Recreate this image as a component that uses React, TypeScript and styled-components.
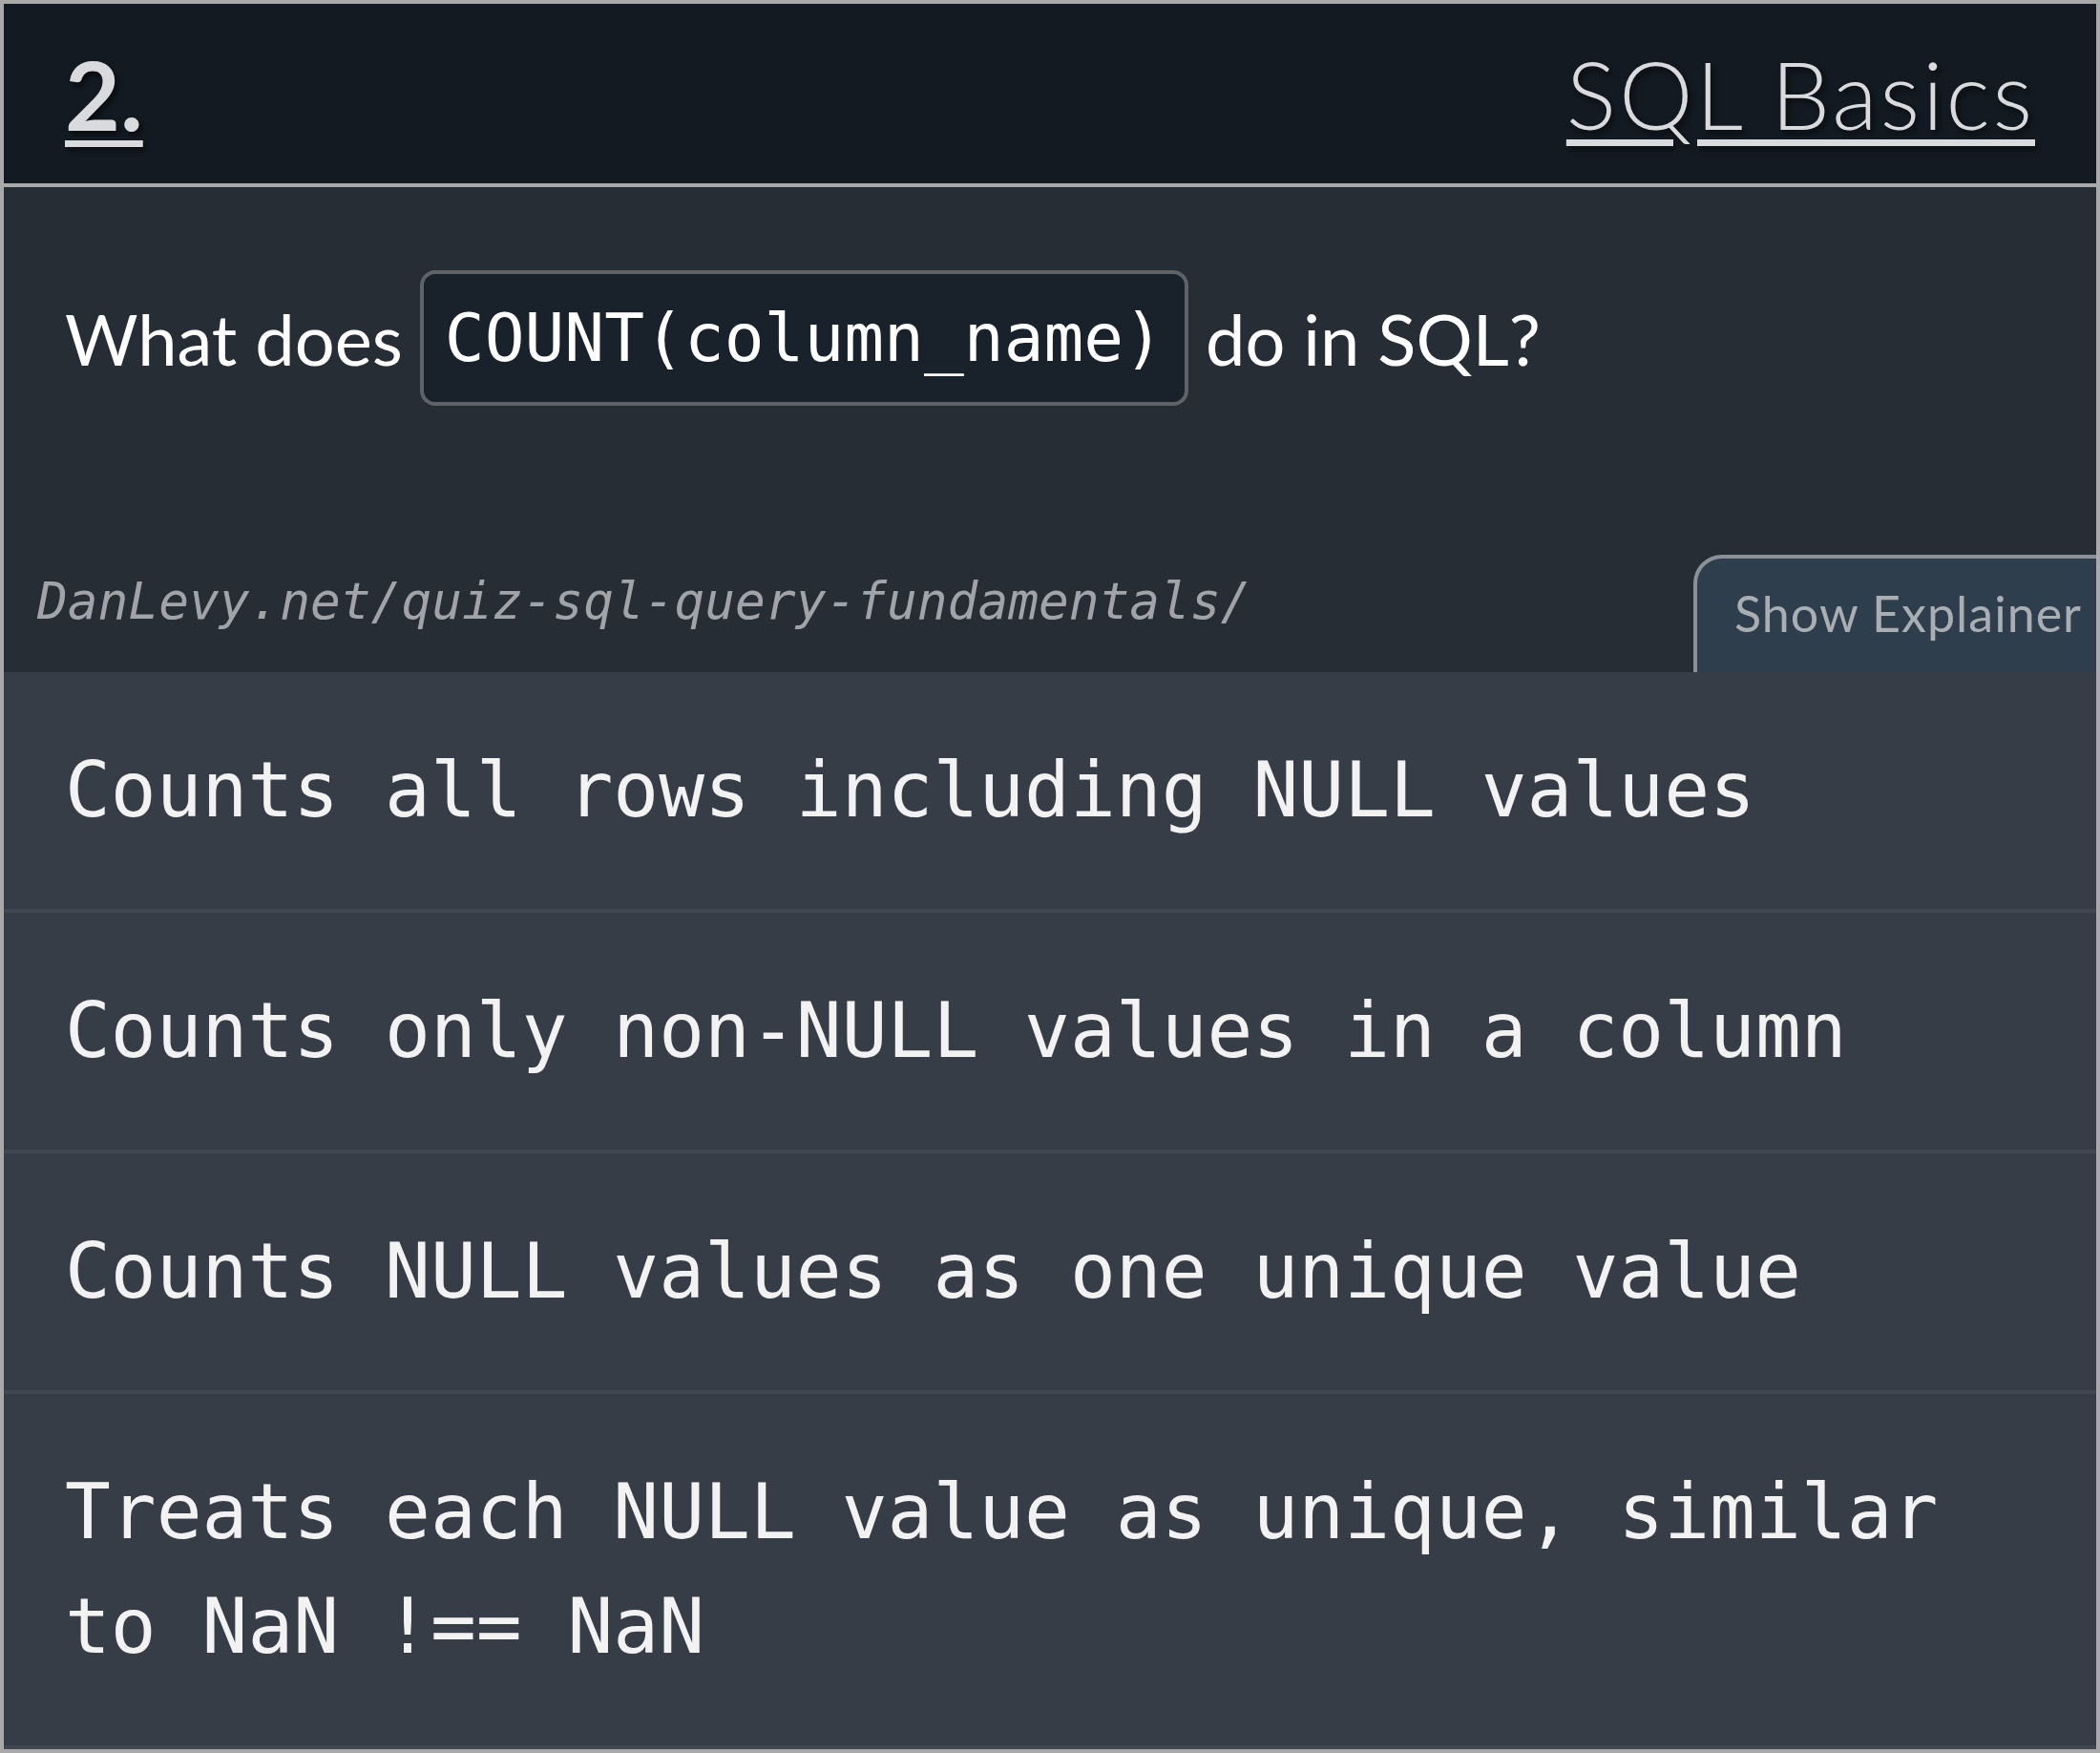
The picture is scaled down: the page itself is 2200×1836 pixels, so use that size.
import styled, { createGlobalStyle } from 'styled-components';

const GlobalStyle = createGlobalStyle`
    html, body {
        margin: 0;
        padding: 0;
        background: #a9a9aa;
    }
    * {
        box-sizing: border-box;
    }
`;

const Card = styled.div`
    width: 2200px;
    border: 4px solid #a9a9aa;
    background: #272d34;
    font-family: Lato, 'Noto Sans', sans-serif;
`;

const Header = styled.header`
    display: flex;
    justify-content: space-between;
    align-items: center;
    height: 192px;
    padding: 0 64px 0 64px;
    background: #131a21;
    border-bottom: 4px solid #a9a9aa;
`;

const HeaderLink = styled.a<{ $weight: number; $size: number; $spacing?: number }>`
    color: #d9dadd;
    font-size: ${(p) => p.$size}px;
    font-weight: ${(p) => p.$weight};
    letter-spacing: ${(p) => p.$spacing || 0}px;
    text-decoration: underline;
    text-decoration-thickness: 7px;
    text-underline-offset: 10px;
    text-shadow: 3px 4px 6px rgba(0, 0, 0, 0.55);
    line-height: 1;
`;

const Body = styled.section`
    padding: 87px 0 0 0;
`;

const Question = styled.div`
    display: flex;
    align-items: center;
    gap: 18px;
    padding: 0 64px;
    color: #fff;
    font-size: 74px;
`;

const Code = styled.code`
    display: inline-block;
    height: 142px;
    padding: 16px 22px;
    border: 4px solid #5f6266;
    border-radius: 16px;
    background: #19212a;
    color: #fff;
    font-family: 'DejaVu Sans Mono', monospace;
    font-size: 69.5px;
    line-height: 102px;
`;

const Footer = styled.div`
    display: flex;
    justify-content: space-between;
    align-items: center;
    height: 123px;
    margin-top: 156px;
`;

const SourceUrl = styled.span`
    padding: 0 0 26px 35px;
    color: #a0a4a8;
    font-family: 'DejaVu Sans Mono', monospace;
    font-style: italic;
    font-size: 52.8px;
`;

const ExplainerTab = styled.button`
    display: flex;
    align-items: center;
    width: 422px;
    height: 123px;
    padding: 0 0 6px 39px;
    border: 4px solid #8b9198;
    border-right: none;
    border-bottom: none;
    border-top-left-radius: 30px;
    background: #2f3e4c;
    color: #a9aeb3;
    font-family: Lato, 'Noto Sans', sans-serif;
    font-size: 52px;
    letter-spacing: 1px;
    white-space: nowrap;
    overflow: hidden;
    cursor: pointer;
`;

const Answers = styled.ol`
    list-style: none;
    margin: 0;
    padding: 0;
    background: #363d46;
`;

const Answer = styled.li`
    padding: 64px 64px;
    border-bottom: 4px solid #40474f;
    color: #f2f2f2;
    font-family: 'DejaVu Sans Mono', monospace;
    font-size: 79.5px;
    line-height: 120px;
`;

const answers = [
    'Counts all rows including NULL values',
    'Counts only non-NULL values in a column',
    'Counts NULL values as one unique value',
    'Treats each NULL value as unique, similar to NaN !== NaN',
];

function App() {
    return (
        <>
            <GlobalStyle />
            <Card>
                <Header>
                    <HeaderLink href="#" $weight={700} $size={100}>
                        2.
                    </HeaderLink>
                    <HeaderLink href="#" $weight={300} $size={98} $spacing={2.8}>
                        SQL Basics
                    </HeaderLink>
                </Header>
                <Body>
                    <Question>
                        <span>What does</span>
                        <Code>COUNT(column_name)</Code>
                        <span>do in SQL?</span>
                    </Question>
                    <Footer>
                        <SourceUrl>DanLevy.net/quiz-sql-query-fundamentals/</SourceUrl>
                        <ExplainerTab>Show Explainer</ExplainerTab>
                    </Footer>
                </Body>
                <Answers>
                    {answers.map((a) => (
                        <Answer key={a}>{a}</Answer>
                    ))}
                </Answers>
            </Card>
        </>
    );
}

export default App;
